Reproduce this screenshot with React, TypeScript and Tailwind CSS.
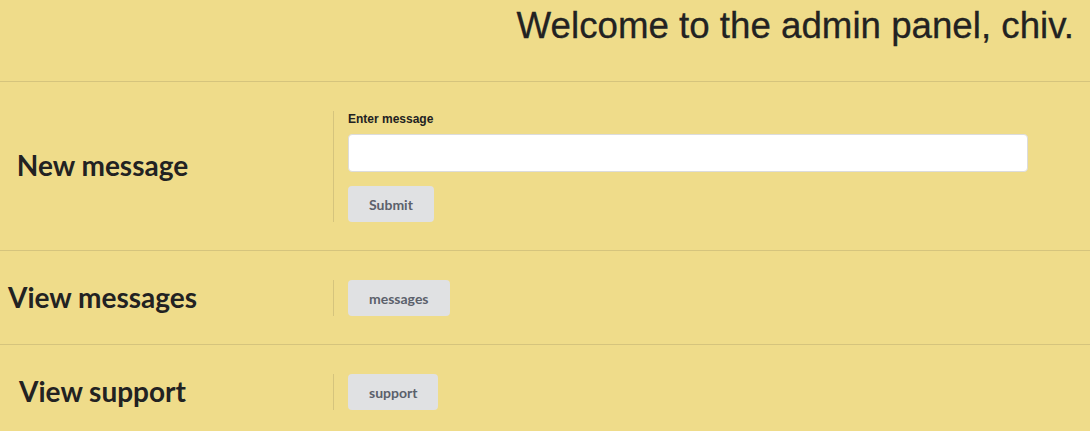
const Section = ({
  title,
  last,
  children,
}: {
  title: string;
  last?: boolean;
  children: React.ReactNode;
}) => {
  return (
    <div
      className={
        last
          ? "flex items-center pt-[29px] pb-[28px]"
          : "flex items-center border-b border-[#d5c47d] pt-[29px] pb-[28px]"
      }
    >
      <div className="w-[333px] shrink-0">
        <h2 className="mb-[3px] w-[205px] text-center font-['Lato'] text-[28px] font-bold leading-[30px] text-[#222]">
          {title}
        </h2>
      </div>
      <div className="flex-1 border-l border-[#d5c47d] pl-[14px]">{children}</div>
    </div>
  );
};

const GrayButton = ({ label }: { label: string }) => (
  <button className="h-[36px] rounded-[4px] bg-[#e0e1e3] px-[21px] font-['Lato'] text-[14px] font-bold text-[#5b606b]">
    {label}
  </button>
);

export default function App() {
  return (
    <div className="min-h-[431px] bg-[#efdc8a] font-['Liberation_Sans',sans-serif] text-[#222]">
      <div className="h-[82px] border-b border-[#d5c47d] pt-[5px] pr-[16px] text-right">
        <h1 className="text-[36.7px] leading-[41px] [-webkit-text-stroke:0.3px_#222]">
          Welcome to the admin panel, chiv.
        </h1>
      </div>

      <Section title="New message">
        <label className="mb-[7px] block text-[12px] font-bold leading-[16px] text-[#222]">
          Enter message
        </label>
        <input
          type="text"
          className="block h-[38px] w-[680px] rounded-[4px] border border-[#dcdcdc] bg-white px-2 outline-none"
        />
        <div className="mt-[14px]">
          <GrayButton label="Submit" />
        </div>
      </Section>

      <Section title="View messages">
        <GrayButton label="messages" />
      </Section>

      <Section title="View support" last>
        <GrayButton label="support" />
      </Section>
    </div>
  );
}
